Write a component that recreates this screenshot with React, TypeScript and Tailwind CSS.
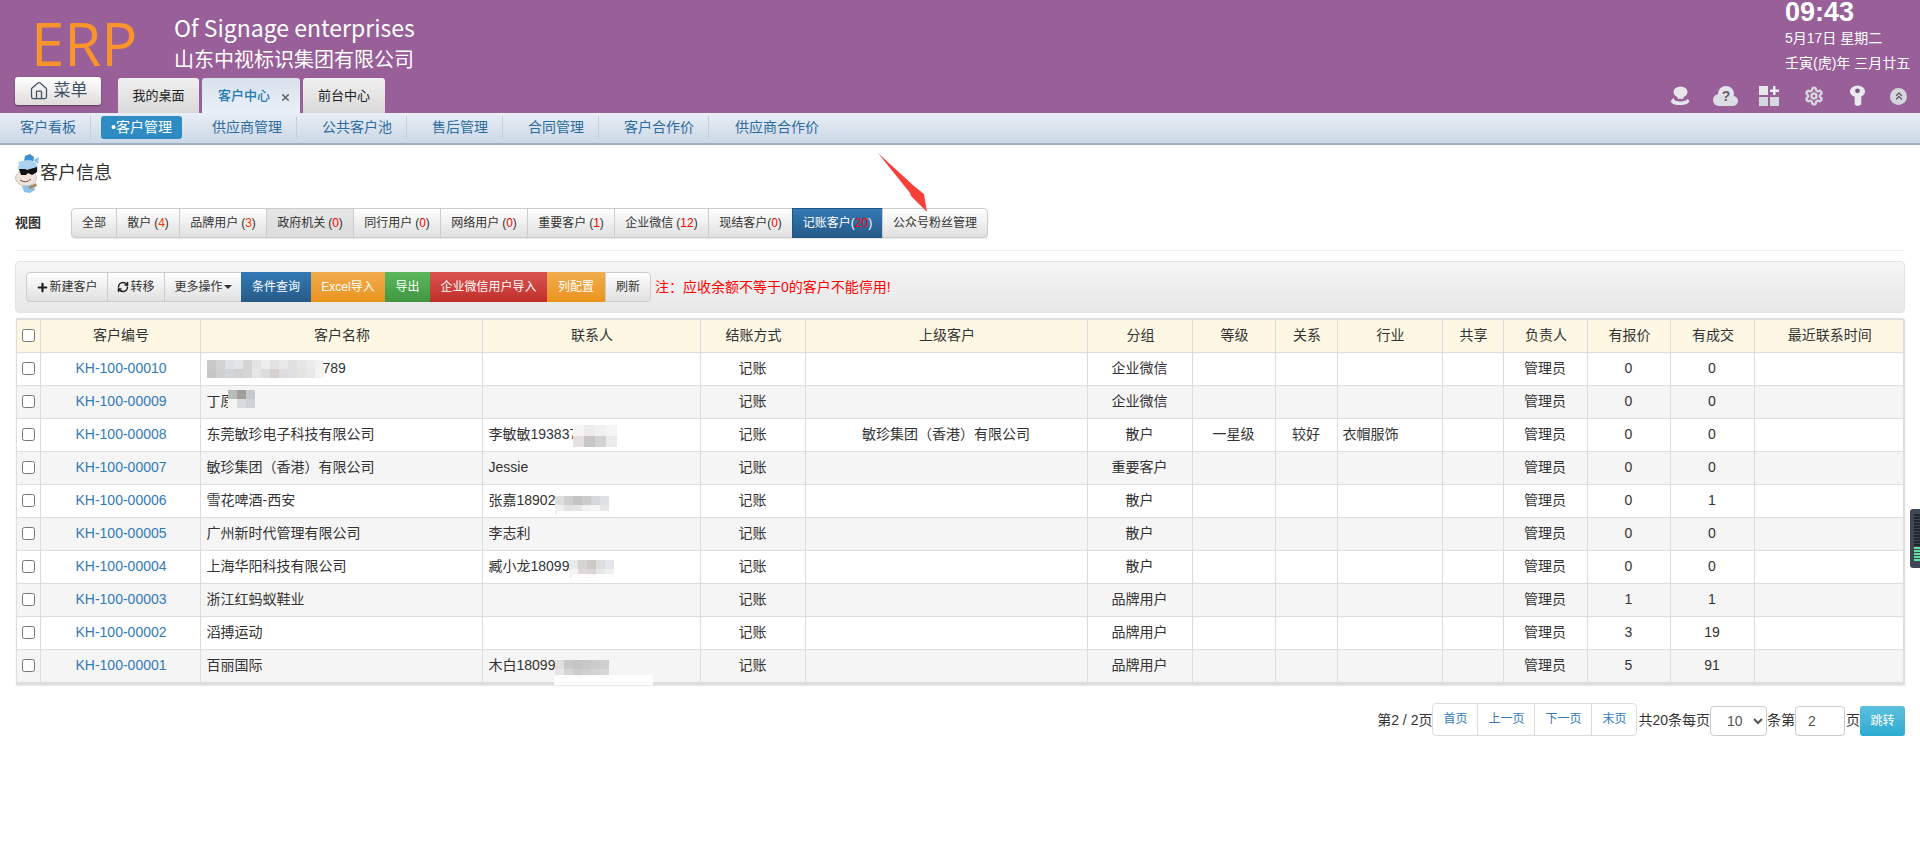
import { ChevronsUp, House, Plus, RefreshCw, Settings, X } from 'lucide-react';

const font = "font-['Liberation_Sans','Noto_Sans_CJK_SC',sans-serif]";

const viewTabs = [
  { label: '全部', w: 'w-[46px]' },
  { label: '散户', count: '(4)', w: 'w-[64px]', hot: true },
  { label: '品牌用户', count: '(3)', w: 'w-[88px]', hot: true },
  { label: '政府机关', count: '(0)', w: 'w-[88px]', pressed: true },
  { label: '同行用户', count: '(0)', w: 'w-[88px]' },
  { label: '网络用户', count: '(0)', w: 'w-[88px]' },
  { label: '重要客户', count: '(1)', w: 'w-[88px]' },
  { label: '企业微信', count: '(12)', w: 'w-[95px]' },
  { label: '现结客户', count: '(0)', w: 'w-[85px]', tight: true },
];

const subNav = [
  { label: '供应商管理', cls: 'pl-[30px] pr-[14px] border-r' },
  { label: '公共客户池', cls: 'pl-[25px] pr-[14px] border-r' },
  { label: '售后管理', cls: 'pl-[25px] pr-[14px] border-r' },
  { label: '合同管理', cls: 'pl-[25px] pr-[14px] border-r' },
  { label: '客户合作价', cls: 'pl-[25px] pr-[14px] border-r' },
  { label: '供应商合作价', cls: 'pl-[26px]' },
];

type Row = {
  code: string;
  name: React.ReactNode;
  contact?: React.ReactNode;
  parent?: string;
  group: string;
  level?: string;
  rel?: string;
  industry?: string;
  quote: number;
  deal: number;
};

// blurred-out bits of the customer data
function Mosaic({ colors, cols, cell = 9, className = '' }: { colors: string[]; cols: number; cell?: number; className?: string }) {
  return (
    <span className={`inline-grid shrink-0 align-middle ${className}`} style={{ gridTemplateColumns: `repeat(${cols}, ${cell}px)`, gridAutoRows: `${cell}px` }}>
      {colors.map((c, i) => (
        <span key={i} style={{ backgroundColor: c }} />
      ))}
    </span>
  );
}

const rows: Row[] = [
  {
    code: 'KH-100-00010',
    name: (
      <span className="flex items-center">
        <Mosaic
          cols={13}
          cell={9}
          colors={[
            '#c9c9c9', '#d2d2d2', '#dfe2e4', '#e6e6e6', '#d4d4d4', '#e4e4e4', '#eeeeee', '#e2e2e2', '#e8e8e8', '#e0e0e0', '#e6e6e6', '#ebebeb', '#f2f2f2',
            '#c6c6c6', '#cfcfcf', '#cfd5d8', '#d3d0d0', '#d6d4d5', '#e6e6e8', '#dddcdb', '#d5d1d1', '#dedee0', '#e0e0e2', '#e4e4e1', '#e8e8e8', '#f4f4f4',
          ]}
        />
        <span className="-ml-[1px]">789</span>
      </span>
    ),
    group: '企业微信',
    quote: 0,
    deal: 0,
  },
  {
    code: 'KH-100-00009',
    name: (
      <span className="relative flex items-center">
        丁原
        <Mosaic className="absolute left-[21px] top-[-1px]" cols={3} cell={9} colors={['#b9bbbb', '#a19f9e', '#c6c9cb', '#f5f5f5', '#d9dadb', '#d0d3d5']} />
      </span>
    ),
    group: '企业微信',
    quote: 0,
    deal: 0,
  },
  {
    code: 'KH-100-00008',
    name: '东莞敏珍电子科技有限公司',
    contact: (
      <span className="relative flex items-center">
        李敏敏193837
        <Mosaic className="-ml-[4px] translate-y-[1px]" cols={4} cell={11} colors={['#f5f5f5', '#ececec', '#f0f0f0', '#f5f5f5', '#e6e0e0', '#c6c6c6', '#d3d3d3', '#ebebeb']} />
      </span>
    ),
    parent: '敏珍集团（香港）有限公司',
    group: '散户',
    level: '一星级',
    rel: '较好',
    industry: '衣帽服饰',
    quote: 0,
    deal: 0,
  },
  { code: 'KH-100-00007', name: '敏珍集团（香港）有限公司', contact: 'Jessie', group: '重要客户', quote: 0, deal: 0 },
  {
    code: 'KH-100-00006',
    name: '雪花啤酒-西安',
    contact: (
      <span className="relative flex items-center">
        张嘉18902
        <Mosaic className="translate-y-[4px]" cols={6} cell={9} colors={['#dedede', '#cfcfcf', '#c4c4c4', '#cccccc', '#d6d9dc', '#dfe1e4', '#eeeeee', '#e2e2e2', '#e6e6e6', '#f3f3f3', '#f5f5f5', '#e4e6e8']} />
        <span className="absolute left-[68px] top-[21px] h-[6px] w-[77px] bg-white/90" />
      </span>
    ),
    group: '散户',
    quote: 0,
    deal: 1,
  },
  { code: 'KH-100-00005', name: '广州新时代管理有限公司', contact: '李志利', group: '散户', quote: 0, deal: 0 },
  {
    code: 'KH-100-00004',
    name: '上海华阳科技有限公司',
    contact: (
      <span className="relative flex items-center">
        臧小龙18099
        <Mosaic className="translate-y-[2px]" cols={5} cell={9} colors={['#e9e9e9', '#d8d4d4', '#cec9c8', '#dcdee0', '#e4e6e9', '#f4f4f4', '#dedbdb', '#d9d6d5', '#e6e7ea', '#eeeff1']} />
        <span className="absolute left-[83px] top-[18px] h-[9px] w-[94px] bg-white/90" />
      </span>
    ),
    group: '散户',
    quote: 0,
    deal: 0,
  },
  { code: 'KH-100-00003', name: '浙江红蚂蚁鞋业', group: '品牌用户', quote: 1, deal: 1 },
  { code: 'KH-100-00002', name: '滔搏运动', group: '品牌用户', quote: 3, deal: 19 },
  {
    code: 'KH-100-00001',
    name: '百丽国际',
    contact: (
      <span className="relative flex items-center">
        木白18099
        <Mosaic className="translate-y-[3px]" cols={6} cell={9} colors={['#e0e0e0', '#c9c9c9', '#c6c4c4', '#c8c8c8', '#cccccc', '#cfcfcf', '#e6e6e6', '#d6d6d6', '#cbcbcb', '#d0d0d0', '#d2d2d2', '#d8d8d8']} />
        <span className="absolute left-[65px] top-[20px] h-[10px] w-[99px] bg-white/90" />
      </span>
    ),
    group: '品牌用户',
    quote: 5,
    deal: 91,
  },
];

const heads = ['客户编号', '客户名称', '联系人', '结账方式', '上级客户', '分组', '等级', '关系', '行业', '共享', '负责人', '有报价', '有成交', '最近联系时间'];

function Check() {
  return <span className="mx-auto block h-[13px] w-[13px] rounded-[2.5px] border border-[#767676] bg-white" />;
}

function Mascot() {
  return (
    <svg viewBox="0 0 25 40" className="h-[40px] w-[25px]">
      <path d="M3 9 L10 8 L7 14 Z M18 7 L24 4 L23 11 Z" fill="#8fc4ea" />
      <path d="M9 8 L10 3 L15 1 L19 4 L18 9 Z" fill="#3d8ecf" />
      <ellipse cx="13" cy="15" rx="10" ry="8" fill="#a9d3f0" />
      <ellipse cx="11" cy="25" rx="10.500" ry="8" fill="#f0e4dc" stroke="#a8a8a8" strokeWidth="0.6" />
      <path d="M4 16 L10 16 L12 17 L15 16 L22 14 L22 19 L17 22 L13 20 L11 22 L6 22 Z" fill="#111" />
      <path d="M5 27 Q11 31 16 26" stroke="#7d4f4a" strokeWidth="1" fill="none" />
      <path d="M7 33 L19 32 L20 37 L15 40 L9 39 Z" fill="#8dc1e8" />
      <path d="M13 34 L21 30 L22 33 L15 36 Z" fill="#a88a66" />
    </svg>
  );
}

function HeaderIcons() {
  return (
    <div className="flex items-center pr-[13px]">
      <svg viewBox="0 0 20 20" className="h-[20px] w-[20px]">
        <ellipse cx="10.500" cy="6" rx="7" ry="5.500" fill="#e6e8ec" />
        <path d="M7 11 L14 11 L13 13 L8 13 Z" fill="#d8dade" />
        <path d="M4 12 C-1 14 0 19 10 19 C20 19 21 14 17 13 C18 16 3 17 4 12 Z" fill="#e4e6ea" />
      </svg>
      <svg viewBox="0 0 25 20" className="ml-[23px] h-[20px] w-[25px]">
        <circle cx="13" cy="8" r="8" fill="#e3e5e9" />
        <circle cx="6" cy="14" r="6" fill="#dcdee3" />
        <circle cx="20" cy="15" r="5" fill="#dcdee3" />
        <rect x="6" y="10" width="14" height="10" fill="#dcdee3" />
        <text x="13" y="15" textAnchor="middle" fontSize="14" fontWeight="700" fill="#6c5a70" fontFamily="Liberation Sans">?</text>
      </svg>
      <svg viewBox="0 0 20 20" className="ml-[21px] h-[20px] w-[20px]">
        <rect x="0" y="0" width="9" height="9" fill="#e6e8ec" />
        <rect x="0" y="11" width="9" height="9" fill="#d6d8de" />
        <rect x="11" y="11" width="9" height="9" fill="#d6d8de" />
        <path d="M14 0h2.500v3.500H20V6h-3.500v3H14V6h-3V3.500h3z" fill="#eef0f3" />
      </svg>
      <Settings size={20} strokeWidth={3} className="ml-[25px] text-[#d2d4da]" />
      <svg viewBox="0 0 18 22" className="ml-[25px] h-[22px] w-[17px]">
        <path d="M1 6 A8 6 0 0 1 17 6 C17 10 13 11 13 12 L13 20 Q9 23 6 20 L6 12 C5 11 1 10 1 6 Z" fill="#e8eaef" />
        <circle cx="9" cy="5.500" r="2.500" fill="#7a5a80" />
      </svg>
      <span className="ml-[24px] flex h-[17px] w-[17px] items-center justify-center rounded-full bg-[#d5d6dc] text-[#5e5468]">
        <ChevronsUp size={12} strokeWidth={2.5} />
      </span>
    </div>
  );
}

export default function App() {
  return (
    <div className={`${font} relative min-h-[845px] bg-white text-[14px] text-[#333]`}>
      {/* top bar */}
      <div className="flex h-[113px] justify-between bg-[#985f99]">
        <div className="flex flex-col">
          <div className="flex h-[77px]">
            <div className="ml-[31px] mt-[2px] w-[143px] font-['Open_Sans'] text-[60px] leading-[82px] font-normal text-[#f9932c]">ERP</div>
            <div className="mt-[13px] text-white">
              <div className="font-['Noto_Sans_CJK_SC'] text-[23px] leading-[28px] whitespace-nowrap">Of Signage enterprises</div>
              <div className="font-['Noto_Sans_CJK_SC'] text-[20px] leading-[36px]">山东中视标识集团有限公司</div>
            </div>
          </div>
          <div className="flex">
            <button className="ml-[15px] flex h-[28px] w-[86px] items-center justify-center gap-[5px] rounded-[3px] bg-gradient-to-b from-white to-[#e0dcdc] text-[17px] text-[#3f5468] shadow-[0_1px_2px_rgba(0,0,0,0.4)]">
              <House size={20} strokeWidth={1.5} />
              菜单
            </button>
            <div className="ml-[17px] mt-[1px] flex h-[35px] gap-[3px] text-[13px]">
              <div className="flex w-[81px] items-center justify-center rounded-t-[3px] bg-gradient-to-b from-[#f0f0f0] to-[#d9d9d9] text-[#222]">我的桌面</div>
              <div className="relative flex w-[98px] items-center rounded-t-[3px] bg-gradient-to-b from-[#d8e1ec] to-[#e9f0f8] pl-[16px] font-medium text-[#1f7bb0]">
                客户中心
                <X size={11} strokeWidth={3.5} className="absolute right-[9px] top-[14px] text-[#666]" />
              </div>
              <div className="flex w-[82px] items-center justify-center rounded-t-[3px] bg-gradient-to-b from-[#f0f0f0] to-[#d9d9d9] text-[#222]">前台中心</div>
            </div>
          </div>
        </div>
        <div className="flex flex-col items-end text-white">
          <div className="w-[135px]">
            <div className="text-[27px] leading-[24px] font-bold whitespace-nowrap">09:43</div>
            <div className="mt-[5px] text-[14px] leading-[18px] whitespace-nowrap">5月17日 星期二</div>
            <div className="mt-[7px] text-[14px] leading-[18px] whitespace-nowrap">壬寅(虎)年 三月廿五</div>
          </div>
          <div className="mt-[13px]">
            <HeaderIcons />
          </div>
        </div>
      </div>

      {/* sub nav */}
      <div className="flex h-[32px] items-start border-b-[2px] border-[#9fb0c2] bg-gradient-to-b from-[#e8eef6] to-[#ccd8e6] pt-[3px] text-[14px] text-[#2e6b9e]">
        <div className="flex h-[23px] items-center border-r border-[#c3d1df] pl-[20px] pr-[14px]">客户看板</div>
        <div className="ml-[10px] flex h-[23px] w-[81px] items-center justify-center rounded-[3px] bg-[#2f8cc2] text-white">•客户管理</div>
        {subNav.map((n) => (
          <div key={n.label} className={`flex h-[23px] items-center border-[#c3d1df] ${n.cls}`}>
            {n.label}
          </div>
        ))}
      </div>

      {/* page title */}
      <div className="ml-[15px] mt-[8px] flex h-[40px] items-center">
        <Mascot />
        <span className="text-[18px] text-[#333]">客户信息</span>
      </div>

      {/* views */}
      <div className="mx-[15px] mt-[15px] flex h-[43px] items-start border-b border-[#eeeeee]">
        <span className="w-[56px] pt-[5px] text-[13px] font-bold">视图</span>
        <div className="flex h-[30px] rounded-[4px] text-[12px] text-[#333] shadow-[0_1px_1px_rgba(0,0,0,0.1)]">
          {viewTabs.map((t, i) => (
            <div
              key={t.label}
              className={`flex items-center justify-center border border-[#ccc] ${i > 0 ? '-ml-px' : 'rounded-l-[4px]'} ${t.w} ${t.pressed ? 'border-[#adadad] bg-gradient-to-b from-[#e6e6e6] to-[#dcdcdc]' : 'bg-gradient-to-b from-white to-[#e0e0e0]'}`}
            >
              {t.label}
              {t.count && (
                <span className={t.tight ? '' : 'ml-[3px]'}>
                  (<span className={t.hot ? 'text-[#f03c02]' : 'text-[#f00]'}>{t.count.slice(1, -1)}</span>)
                </span>
              )}
            </div>
          ))}
          <div className="-ml-px flex w-[91px] items-center justify-center border border-[#245580] bg-gradient-to-b from-[#337ab7] to-[#265a88] text-white">
            记账客户(<span className="text-[#f00]">20</span>)
          </div>
          <div className="-ml-px flex w-[106px] items-center justify-center rounded-r-[4px] border border-[#ccc] bg-gradient-to-b from-white to-[#e0e0e0]">公众号粉丝管理</div>
        </div>
      </div>

      {/* toolbar */}
      <div className="mx-[15px] mt-[10px] flex h-[52px] items-center rounded-[4px] border border-[#e3e3e3] bg-gradient-to-b from-[#f5f5f5] to-[#e8e8e8] pl-[10px] text-[12px]">
        <div className="flex h-[30px]">
          <div className="flex w-[82px] items-center justify-center rounded-l-[4px] border border-[#ccc] bg-gradient-to-b from-white to-[#e0e0e0]">
            <Plus size={13} strokeWidth={4} className="text-[#222]" />
            新建客户
          </div>
          <div className="-ml-px flex w-[58px] items-center justify-center gap-[1px] border border-[#ccc] bg-gradient-to-b from-white to-[#e0e0e0]">
            <RefreshCw size={12} strokeWidth={3} className="text-[#222]" />
            转移
          </div>
          <div className="-ml-px flex w-[78px] items-center justify-center border border-[#ccc] bg-gradient-to-b from-white to-[#e0e0e0]">
            更多操作
            <span className="ml-[1px] border-x-[4px] border-t-[4px] border-x-transparent border-t-[#333]" />
          </div>
          <div className="-ml-px flex w-[70px] items-center justify-center bg-gradient-to-b from-[#337ab7] to-[#265a88] text-white">条件查询</div>
          <div className="flex w-[74px] items-center justify-center bg-gradient-to-b from-[#f0ad4e] to-[#eb9316] text-white">Excel导入</div>
          <div className="flex w-[45px] items-center justify-center bg-gradient-to-b from-[#5cb85c] to-[#419641] text-white">导出</div>
          <div className="flex w-[117px] items-center justify-center bg-gradient-to-b from-[#d9534f] to-[#c12e2a] text-white">企业微信用户导入</div>
          <div className="flex w-[58px] items-center justify-center bg-gradient-to-b from-[#f0ad4e] to-[#eb9316] text-white">列配置</div>
          <div className="flex w-[46px] items-center justify-center rounded-r-[4px] border border-[#ccc] bg-gradient-to-b from-white to-[#e0e0e0]">刷新</div>
        </div>
        <span className="ml-[4px] text-[14px] text-[#f00]">注：应收余额不等于0的客户不能停用!</span>
      </div>

      {/* customer table */}
      <div className="ml-[16px] mt-[5px] w-[1889px] rounded-tr-[3px] border-y-2 border-r-2 border-l border-[#dedede] shadow-[0_1px_2px_rgba(0,0,0,0.1)]">
        <table className="w-full table-fixed border-collapse">
          <colgroup>
            {[23, 160, 282, 218, 105, 282, 105, 83, 62, 105, 61, 84, 83, 84, 149].map((w, i) => (
              <col key={i} style={{ width: w }} />
            ))}
          </colgroup>
          <thead>
            <tr className="h-[32px] bg-[#fdf7e3]">
              <th className="border border-t-0 border-l-0 border-[#ddd]">
                <Check />
              </th>
              {heads.map((h, i) => (
                <th key={h} className={`border border-t-0 border-[#ddd] pl-[2px] text-center text-[14px] font-normal ${i === 13 ? 'border-r-0' : ''}`}>
                  {h}
                </th>
              ))}
            </tr>
          </thead>
          <tbody>
            {rows.map((r, i) => (
              <tr key={r.code} className={`h-[33px] ${i % 2 ? 'bg-[#f5f5f5]' : 'bg-white'}`}>
                <td className="border border-l-0 border-[#ddd]">
                  <Check />
                </td>
                <td className="border border-[#ddd] pl-[2px] text-center text-[#337ab7]">{r.code}</td>
                <td className="border border-[#ddd] px-[6px]">{r.name}</td>
                <td className="border border-[#ddd] px-[6px]">{r.contact}</td>
                <td className="border border-[#ddd] text-center">记账</td>
                <td className="border border-[#ddd] text-center">{r.parent}</td>
                <td className="border border-[#ddd] text-center">{r.group}</td>
                <td className="border border-[#ddd] text-center">{r.level}</td>
                <td className="border border-[#ddd] text-center">{r.rel}</td>
                <td className="border border-[#ddd] px-[5px]">{r.industry}</td>
                <td className="border border-[#ddd]"></td>
                <td className="border border-[#ddd] text-center">管理员</td>
                <td className="border border-[#ddd] text-center">{r.quote}</td>
                <td className="border border-[#ddd] text-center">{r.deal}</td>
                <td className="border border-r-0 border-[#ddd]"></td>
              </tr>
            ))}
          </tbody>
        </table>
      </div>

      {/* pagination */}
      <div className="mr-[15px] mt-[21px] flex items-center justify-end text-[14px]">
        <span>第2 / 2页</span>
        <div className="-mt-[3px] flex h-[33px] rounded-[4px] border border-[#ddd] text-[12px] text-[#337ab7]">
          <span className="flex w-[45px] items-center justify-center border-r border-[#ddd]">首页</span>
          <span className="flex w-[57px] items-center justify-center border-r border-[#ddd]">上一页</span>
          <span className="flex w-[57px] items-center justify-center border-r border-[#ddd]">下一页</span>
          <span className="flex w-[44px] items-center justify-center">末页</span>
        </div>
        <span className="ml-[1px]">共20条每页</span>
        <select defaultValue="10" className="h-[30px] w-[57px] rounded-[4px] border border-[#ccc] bg-white pl-[12px] text-[14px] text-[#555]">
          <option>10</option>
        </select>
        <span>条第</span>
        <input defaultValue="2" className="h-[30px] w-[50px] rounded-[4px] border border-[#ccc] pl-[12px] text-[14px] text-[#555]" />
        <span className="ml-[1px]">页</span>
        <button className="h-[30px] w-[45px] rounded-[3px] bg-gradient-to-b from-[#5bc0de] to-[#2aabd2] text-[12px] text-white">跳转</button>
      </div>

      {/* screenshot arrow */}
      <svg viewBox="0 0 60 70" className="absolute left-[870px] top-[150px] h-[70px] w-[60px]">
        <path d="M8 3 L44 36 L54 44 L57 62 L41 46 L40 43 Z" fill="#f5403c" />
      </svg>

      {/* floating widget at the window edge */}
      <div className="absolute left-[1910px] top-[509px] flex h-[59px] w-[10px] flex-col gap-[1px] rounded-l-[3px] bg-[#3f4654] py-[5px] pl-[4px]">
        {Array.from({ length: 16 }).map((_, i) => (
          <span key={i} className={`h-[2px] w-[6px] ${i > 10 ? 'bg-[#5fe3a1]' : 'bg-[#20252e]'}`} />
        ))}
      </div>
    </div>
  );
}
